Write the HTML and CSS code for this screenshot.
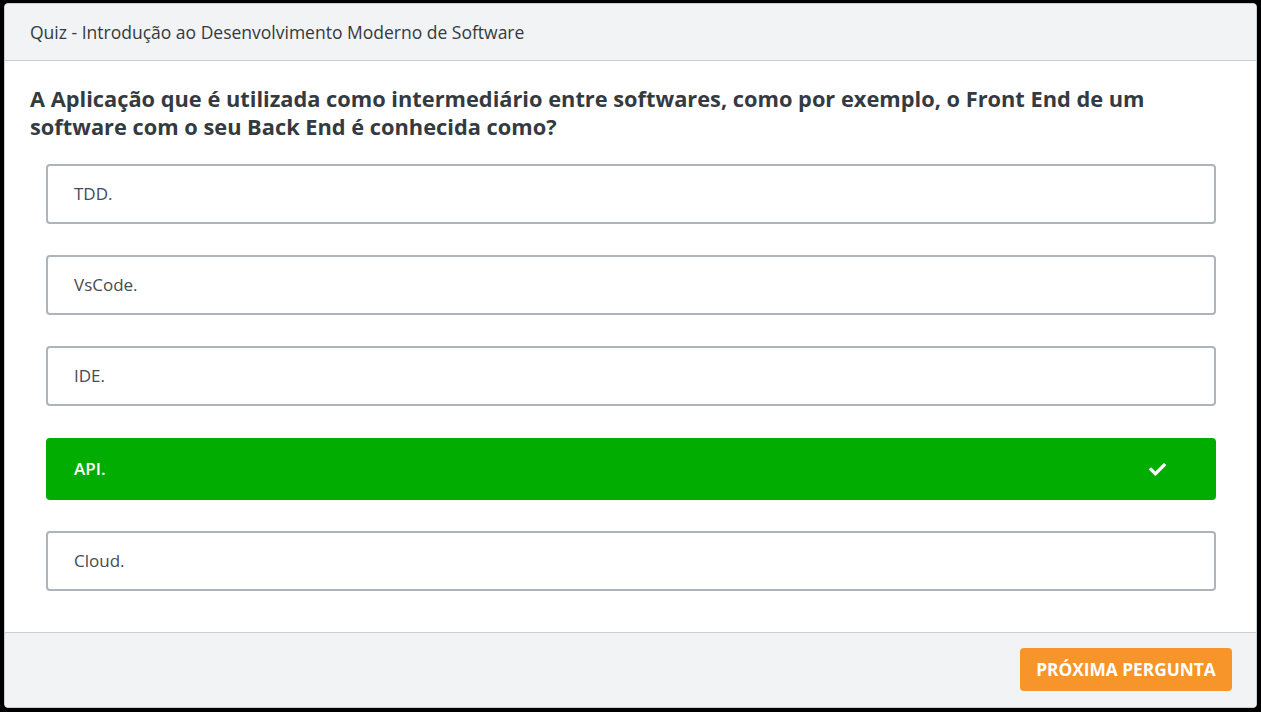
FILE: index.html
```html
<!DOCTYPE html>
<html lang="pt">
<head>
<meta charset="utf-8">
<title>Quiz</title>
<link rel="stylesheet" href="styles.css">
</head>
<body>
<div class="card">
  <div class="card-header">Quiz - Introdução ao Desenvolvimento Moderno de Software</div>
  <div class="card-body">
    <h2 class="question">A Aplicação que é utilizada como intermediário entre softwares, como por exemplo, o Front End de um software com o seu Back End é conhecida como?</h2>
    <div class="options">
      <div class="option">TDD.</div>
      <div class="option">VsCode.</div>
      <div class="option">IDE.</div>
      <div class="option correct"><span>API.</span>
        <svg class="check" viewBox="0 0 512 512" width="17" height="17"><path fill="#fff" d="M173.9 439.4l-166.4-166.4c-10-10-10-26.2 0-36.2l36.2-36.2c10-10 26.2-10 36.2 0L192 312.7 432.1 72.6c10-10 26.2-10 36.2 0l36.2 36.2c10 10 10 26.2 0 36.2l-294.4 294.4c-10 10-26.2 10-36.2 0z"/></svg>
      </div>
      <div class="option">Cloud.</div>
    </div>
  </div>
  <div class="card-footer">
    <button class="next">PRÓXIMA PERGUNTA</button>
  </div>
</div>
</body>
</html>
```

FILE: styles.css
```css
html, body { margin: 0; padding: 0; }
body {
  background: #000;
  padding: 3px 4px 4px 4px;
  font-family: "Open Sans", "Noto Sans", sans-serif;
  color: #343a40;
}
.card {
  background: #fff;
  border: 1px solid #c9ced4;
  border-radius: 4px;
  overflow: hidden;
  height: 705px;
  box-sizing: border-box;
  display: flex;
  flex-direction: column;
}
.card-header {
  background: #f2f3f5;
  border-bottom: 1px solid #c9ced4;
  padding: 16px 25px;
  font-size: 17.5px;
  line-height: 24px;
  color: #343a40;
}
.card-body {
  flex: 1;
  padding: 24px 25px 0 25px;
}
.question {
  margin: 0;
  font-size: 21.8px;
  line-height: 28px;
  font-weight: 700;
  color: #343a40;
}
.options {
  margin: 23px 15px 0 16px;
  display: flex;
  flex-direction: column;
  gap: 31px;
}
.option {
  border: 2px solid #aeb4bb;
  border-radius: 4px;
  padding: 16px 26px;
  font-size: 17px;
  line-height: 24px;
  color: #454b52;
  display: flex;
  align-items: center;
  justify-content: space-between;
}
.option.correct {
  background: #00ad00;
  border-color: #00ad00;
  color: #fff;
  font-weight: 600;
  padding-top: 17px;
  padding-bottom: 17px;
  padding-right: 48px;
  margin-top: 1px;
}
.check { display: block; }
.card-footer {
  background: #f2f3f5;
  border-top: 1px solid #c9ced4;
  padding: 15px 24px 16px;
  display: flex;
  justify-content: flex-end;
}
.next {
  background: #f7952b;
  color: #fff;
  border: none;
  border-radius: 4px;
  font-family: "Open Sans", "Noto Sans", sans-serif;
  font-weight: 700;
  font-size: 17.3px;
  width: 212px;
  height: 43px;
  padding: 0;
}
```
